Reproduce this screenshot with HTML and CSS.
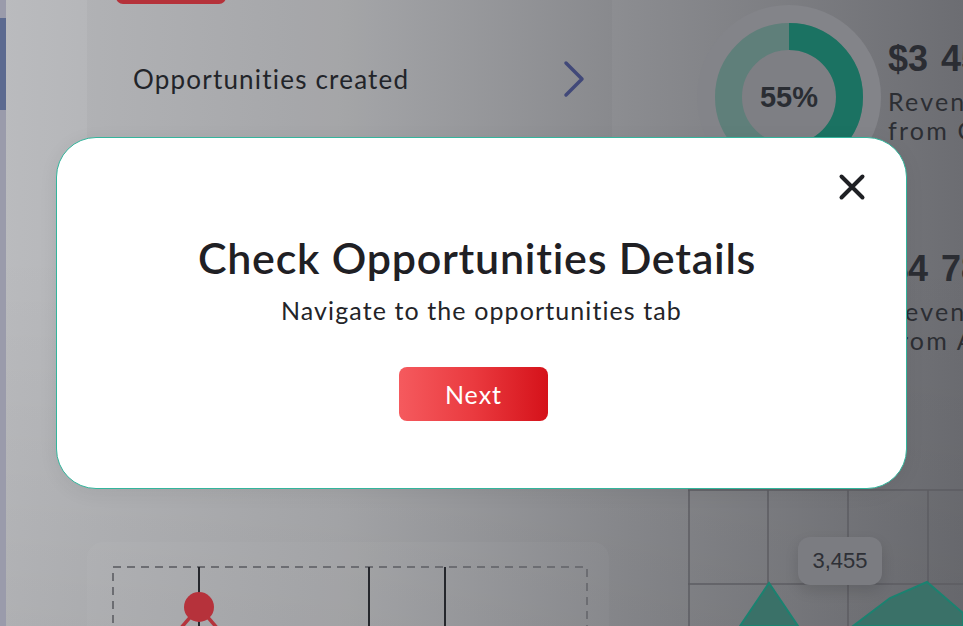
FILE: index.html
```html
<!DOCTYPE html>
<html lang="en">
<head>
    <meta charset="UTF-8">
    <meta name="viewport" content="width=device-width, initial-scale=1.0">
    <title>Opportunities</title>

    <link rel="stylesheet" href="styles.css">
</head>
<body>

    <div class="app">

        <div class="sidebar">
            <div class="sidebar-active"></div>
        </div>

        <div class="main">

            <!-- left column -->
            <div class="col-left">

                <div class="card card-top">
                    <div class="red-btn"></div>
                    <div class="opp-row">
                        <span>Opportunities created</span>
                        <svg class="chevron" width="22" height="38" viewBox="0 0 22 38">
                            <path d="M3 3 L19 19 L3 35" fill="none" stroke="#414879" stroke-width="3.5" stroke-linecap="round" stroke-linejoin="round"/>
                        </svg>
                    </div>
                </div>

                <div class="card card-bottom">
                    <svg class="flow" width="476" height="60" viewBox="0 0 476 60">
                        <rect x="1" y="1" width="474" height="100" fill="none" stroke="#6c6d72" stroke-width="2" stroke-dasharray="8 6"/>
                        <line x1="87" y1="1" x2="87" y2="60" stroke="#25272c" stroke-width="2"/>
                        <line x1="257" y1="1" x2="257" y2="60" stroke="#25272c" stroke-width="2"/>
                        <line x1="333" y1="1" x2="333" y2="60" stroke="#25272c" stroke-width="2"/>
                        <line x1="87" y1="41" x2="62" y2="70" stroke="#b5343c" stroke-width="3.5"/>
                        <line x1="87" y1="41" x2="112" y2="70" stroke="#b5343c" stroke-width="3.5"/>
                        <circle cx="87" cy="41" r="15" fill="#b6323b"/>
                    </svg>
                </div>

            </div>

            <!-- right column -->
            <div class="col-right">

                <div class="stat-row">
                    <div class="donut">
                        <svg width="184" height="184" viewBox="0 0 184 184">
                            <circle cx="92" cy="92" r="92" fill="#838489"/>
                            <circle cx="92" cy="92" r="60.5" fill="#7e7f84" stroke="#5f7f7a" stroke-width="27"/>
                            <circle cx="92" cy="92" r="60.5" fill="none" stroke="#1b7262" stroke-width="27"
                                stroke-dasharray="209.1 380.1" transform="rotate(-90 92 92)"/>
                        </svg>
                        <span class="donut-label">55%</span>
                    </div>
                    <div class="stat-text">
                        <div class="stat-value">$3 450 000</div>
                        <div class="stat-desc">Revenue<br>from Closed deals</div>
                    </div>
                </div>

                <div class="stat-row">
                    <div class="donut">
                        <svg width="184" height="184" viewBox="0 0 184 184">
                            <circle cx="92" cy="92" r="92" fill="#7e7f84"/>
                        </svg>
                    </div>
                    <div class="stat-text">
                        <div class="stat-value">$4 780 000</div>
                        <div class="stat-desc">Revenue<br>from All deals</div>
                    </div>
                </div>

                <div class="chart">
                    <svg width="275" height="137" viewBox="0 0 275 137">
                        <g stroke="#5c5d62" stroke-width="1.5">
                            <line x1="1" y1="1" x2="1" y2="137"/>
                            <line x1="80" y1="1" x2="80" y2="137"/>
                            <line x1="160" y1="1" x2="160" y2="137"/>
                            <line x1="240" y1="1" x2="240" y2="137"/>
                            <line x1="0" y1="1" x2="275" y2="1"/>
                            <line x1="0" y1="95" x2="275" y2="95"/>
                        </g>
                        <polygon points="52,137 81,94 110,137" fill="#3a7168" stroke="#1b8270" stroke-width="2"/>
                        <polygon points="165,137 202,109 239,93 275,124 275,137" fill="#3a7168" stroke="#1b8270" stroke-width="2"/>
                    </svg>
                    <div class="tooltip">3,455</div>
                </div>

            </div>

        </div>

    </div>

    <!-- onboarding modal -->
    <div class="modal">
        <button class="close" aria-label="Close">
            <svg width="28" height="28" viewBox="0 0 28 28">
                <path d="M3.5 3.5 L24.5 24.5 M24.5 3.5 L3.5 24.5" stroke="#1f2024" stroke-width="4" stroke-linecap="round"/>
            </svg>
        </button>
        <h2 class="modal-title">Check Opportunities Details</h2>
        <p class="modal-text">Navigate to the opportunities tab</p>
        <button class="btn-next">Next</button>
    </div>

</body>
</html>
```

FILE: styles.css
```css
*{
    margin: 0;
    padding: 0;
    box-sizing: border-box;
}

body{
    width: 963px;
    height: 626px;
    overflow: hidden;
    position: relative;
    font-family: "Lato", "Noto Sans", sans-serif;
    color: #222327;
    background:
        linear-gradient(to bottom, rgba(0,0,0,0) 40%, rgba(0,0,0,0.06) 100%),
        linear-gradient(90deg, #babbbe 0%, #a9aaad 35%, #8b8c90 65%, #6c6d72 100%);
}

.app{
    display: flex;
    height: 626px;
}

/* sidebar edge */

.sidebar{
    width: 6px;
    background: #9a9bab;
}

.sidebar-active{
    margin-top: 18px;
    height: 92px;
    background: #5c6a90;
}

.main{
    flex: 1;
    display: flex;
    gap: 76px;
    padding-left: 81px;
}

/* left column */

.col-left{
    width: 525px;
    display: flex;
    flex-direction: column;
}

.card{
    flex-shrink: 0;
    background: rgba(0,0,0,0.025);
    border-radius: 16px;
}

.card-top{
    margin-top: -40px;
    height: 240px;
    padding: 0 27px 0 29px;
}

.red-btn{
    width: 110px;
    height: 44px;
    background: #b5323a;
    border-radius: 0 0 7px 7px;
}

.opp-row{
    margin-top: 56px;
    padding-left: 17px;
    display: flex;
    justify-content: space-between;
    align-items: center;
    height: 38px;
    font-size: 26px;
    letter-spacing: 1.2px;
    color: #222429;
}

.card-bottom{
    margin-top: 342px;
    width: 522px;
    height: 84px;
    padding: 24px 0 0 25px;
    border-radius: 16px 16px 0 0;
    background: rgba(255,255,255,0.03);
}

.flow{
    display: block;
}

/* right column */

.col-right{
    width: 275px;
    padding-top: 5px;
    display: flex;
    flex-direction: column;
}

.stat-row{
    flex-shrink: 0;
    display: flex;
    align-items: flex-start;
    gap: 7px;
    height: 184px;
    margin-bottom: 26px;
    margin-left: 9px;
}

.donut{
    position: relative;
    width: 184px;
    height: 184px;
    flex-shrink: 0;
}

.donut svg{
    display: block;
}

.donut-label{
    position: absolute;
    inset: 0;
    display: flex;
    justify-content: center;
    align-items: center;
    font-family: "Liberation Sans", Arial, sans-serif;
    font-weight: 700;
    font-size: 29px;
    color: #2a2d33;
}

.stat-text{
    white-space: nowrap;
    padding-top: 36px;
}

.stat-value{
    font-family: "Liberation Sans", Arial, sans-serif;
    font-weight: 700;
    font-size: 36px;
    line-height: 36px;
    word-spacing: 3px;
    color: #2b2d33;
}

.stat-desc{
    margin-top: 10px;
    font-size: 25px;
    line-height: 29px;
    letter-spacing: 2.2px;
    color: #2c2e33;
}

.chart{
    flex-shrink: 0;
    position: relative;
    margin-top: 64px;
}

.chart svg{
    display: block;
}

.tooltip{
    position: absolute;
    left: 110px;
    top: 48px;
    width: 84px;
    height: 48px;
    border-radius: 12px;
    background: #7b7c81;
    box-shadow: 0 6px 14px rgba(0,0,0,0.12);
    display: flex;
    justify-content: center;
    align-items: center;
    font-family: "Liberation Sans", Arial, sans-serif;
    font-size: 22px;
    color: #2e3036;
}

/* modal */

.modal{
    position: absolute;
    left: 56px;
    top: 137px;
    width: 851px;
    height: 352px;
    background: #fff;
    border: 1.5px solid #33b59c;
    border-radius: 40px;
    display: flex;
    flex-direction: column;
    align-items: center;
    padding-top: 95px;
    box-shadow: 0 4px 20px rgba(0,0,0,0.06);
}

.close{
    position: absolute;
    top: 35px;
    right: 40px;
    width: 28px;
    height: 28px;
    border: none;
    background: none;
    cursor: pointer;
}

.close svg{
    display: block;
}

.modal-title{
    margin-right: 9px;
    font-size: 43px;
    line-height: 50px;
    font-weight: 600;
    letter-spacing: 0.75px;
    color: #1f2024;
}

.modal-text{
    margin-top: 12px;
    font-size: 25px;
    line-height: 30px;
    letter-spacing: 1.1px;
    color: #232428;
}

.btn-next{
    margin-top: 42px;
    margin-right: 16px;
    width: 149px;
    height: 54px;
    border: none;
    border-radius: 8px;
    background: linear-gradient(90deg, #f55a5e 0%, #ea3a3f 50%, #d5121a 100%);
    color: #fff;
    font-family: "Lato", "Noto Sans", sans-serif;
    font-size: 25px;
    letter-spacing: 1px;
    cursor: pointer;
}
```
